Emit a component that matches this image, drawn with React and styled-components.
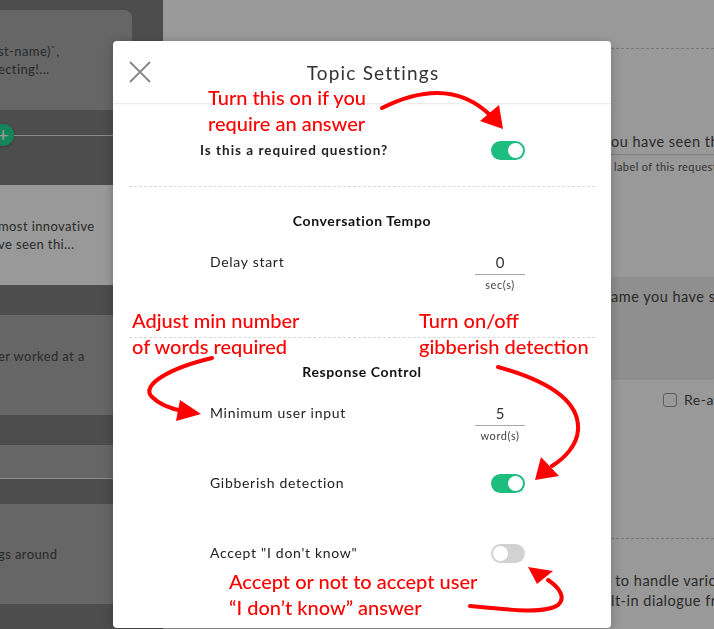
import styled, { createGlobalStyle } from "styled-components";

const colors = {
  sidebar: "#808080",
  card: "#aaaaaa",
  text: "#474747",
  green: "#1dbd80",
  red: "#ff0000",
};

const GlobalStyle = createGlobalStyle`
  html, body {
    margin: 0;
    padding: 0;
    height: 100%;
    overflow: hidden;
  }
  body {
    font-family: Lato, "Liberation Sans", sans-serif;
  }
  * {
    box-sizing: border-box;
  }
`;

export default function App() {
  return (
    <>
      <GlobalStyle />
      <Page>
        <Sidebar>
          <SideCard gap={0}>
            <span>st-name)`,</span>
            <span>ecting!...</span>
          </SideCard>
          <AddRow>
            <AddButton>+</AddButton>
            <AddLine />
          </AddRow>
          <SideCard active gap={0}>
            <span>most innovative</span>
            <span>ve seen thi...</span>
          </SideCard>
          <SideCard gap={30}>
            <span>er worked at a</span>
            <span>&nbsp;</span>
          </SideCard>
          <SideCard short gap={30} />
          <SideCard gap={25}>
            <span>gs around</span>
          </SideCard>
        </Sidebar>

        <Main>
          <DashedRule top={48} />
          <Question>ou have seen this year?</Question>
          <Helper>label of this request</Helper>
          <AnswerCard>ame you have seen</AnswerCard>
          <CheckRow>
            <CheckBox />
            <span>Re-ask the question</span>
          </CheckRow>
          <DashedRule top={128} />
          <Paragraph>
            <span>&nbsp;to handle various situations</span>
            <span>lt-in dialogue from the library</span>
          </Paragraph>
        </Main>
      </Page>

      <Overlay />

      <Modal>
        <Header>
          <CloseButton aria-label="close">
            <svg width="22" height="22" viewBox="0 0 22 22">
              <path d="M1 1 L21 21 M21 1 L1 21" stroke="#8a8a8a" strokeWidth="2" fill="none" />
            </svg>
          </CloseButton>
          <Title>Topic Settings</Title>
          <span />
        </Header>

        <Body>
          <Section top={34} bottom={24}>
            <Row indent={71} compact>
              <Label strong>Is this a required question?</Label>
              <Control>
                <Toggle on />
              </Control>
            </Row>
          </Section>

          <Section divided top={24} bottom={44}>
            <Heading>Conversation Tempo</Heading>
            <Rows>
              <Row>
                <Label>Delay start</Label>
                <Control>
                  <Value>0</Value>
                  <Unit>sec(s)</Unit>
                </Control>
              </Row>
            </Rows>
          </Section>

          <Section divided top={24} bottom={0}>
            <Heading>Response Control</Heading>
            <Rows>
              <Row>
                <Label>Minimum user input</Label>
                <Control>
                  <Value>5</Value>
                  <Unit>word(s)</Unit>
                </Control>
              </Row>
              <Row>
                <Label>Gibberish detection</Label>
                <Control>
                  <Toggle on />
                </Control>
              </Row>
              <Row>
                <Label>Accept "I don't know"</Label>
                <Control>
                  <Toggle />
                </Control>
              </Row>
            </Rows>
          </Section>
        </Body>

        {/* annotations drawn over the dialog */}
        <Notes>
          <Arrows width="498" height="587" viewBox="0 0 498 587">
            <g stroke={colors.red} strokeWidth="4" fill="none" strokeLinecap="round">
              <path d="M269 67 Q337 33 379 76" />
              <path d="M99 317 C57 327 27 344 39 356 C47 364 59 368 70 370" />
              <path d="M385 326 C432 339 467 359 465 389 C464 404 452 417 439 425" />
              <path d="M357 565 C397 569 432 573 445 564 C453 557 447 547 435 539" />
            </g>
            <g fill={colors.red}>
              <polygon points="390,88 367,80 386,64" />
              <polygon points="88,373 67,359 63,380" />
              <polygon points="422,439 428,416 446,435" />
              <polygon points="415,526 424,543 440,530" />
            </g>
          </Arrows>
          <Note x={95} y={44}>
            Turn this on if you
            <br />
            require an answer
          </Note>
          <Note x={19} y={267}>
            Adjust min number
            <br />
            of words required
          </Note>
          <Note x={306} y={267}>
            Turn on/off
            <br />
            gibberish detection
          </Note>
          <Note x={116} y={528}>
            Accept or not to accept user
            <br />
            “I don’t know” answer
          </Note>
        </Notes>
      </Modal>
    </>
  );
}

/* =================== Page behind the dialog =================== */

const Page = styled.div`
  display: flex;
  height: 100vh;
  overflow: hidden;
`;

const Sidebar = styled.div`
  width: 163px;
  flex-shrink: 0;
  background: ${colors.sidebar};
  padding-top: 10px;
  display: flex;
  flex-direction: column;
  overflow: hidden;
`;

const SideCard = styled.div`
  height: ${(p) => (p.short ? 34 : 100)}px;
  margin-top: ${(p) => p.gap}px;
  margin-right: 31px;
  margin-left: -2px;
  background: ${(p) => (p.active ? "#ffffff" : colors.card)};
  border-radius: 0 8px 8px 0;
  border-bottom: ${(p) => (p.short ? "1px solid #e8e8e8" : "none")};
  display: flex;
  flex-direction: column;
  justify-content: center;
  font-size: 13px;
  line-height: 18.5px;
  letter-spacing: 0.4px;
  color: ${colors.text};
  white-space: nowrap;
  flex-shrink: 0;
`;

const AddRow = styled.div`
  height: 75px;
  display: flex;
  align-items: flex-start;
  padding-top: 14px;
  flex-shrink: 0;
`;

const AddButton = styled.div`
  width: 22px;
  height: 22px;
  margin-left: -8px;
  border-radius: 50%;
  background: #20de9c;
  color: #ffffff;
  font-size: 20px;
  line-height: 21px;
  text-align: center;
  box-shadow: 0 1px 3px rgba(0, 0, 0, 0.3);
  flex-shrink: 0;
`;

const AddLine = styled.div`
  flex: 1;
  height: 1px;
  margin-top: 11px;
  background: #e6e6e6;
`;

const Main = styled.div`
  flex: 1;
  background: #ffffff;
  padding-left: 448px;
  display: flex;
  flex-direction: column;
  color: ${colors.text};
  white-space: nowrap;
  overflow: hidden;
`;

const DashedRule = styled.div`
  margin-top: ${(p) => p.top}px;
  border-top: 1px dashed #c8c8c8;
`;

const Question = styled.div`
  margin-top: 83px;
  font-size: 14.5px;
  line-height: 20px;
  letter-spacing: 0.5px;
  padding-bottom: 2px;
  border-bottom: 1px solid #d0d0d0;
`;

const Helper = styled.div`
  margin-top: 5px;
  font-size: 11px;
  line-height: 14px;
  letter-spacing: 0.4px;
  padding-left: 3px;
  color: #555555;
`;

const AnswerCard = styled.div`
  margin-top: 103px;
  height: 101px;
  padding-top: 10px;
  background: #eeeeee;
  font-size: 14.5px;
  line-height: 20px;
  letter-spacing: 0.5px;
  box-shadow: 0 1px 2px rgba(0, 0, 0, 0.15);
`;

const CheckRow = styled.div`
  margin-top: 12px;
  padding-left: 52px;
  display: flex;
  align-items: center;
  gap: 7px;
  font-size: 14px;
  line-height: 20px;
  letter-spacing: 0.5px;
`;

const CheckBox = styled.span`
  width: 14px;
  height: 14px;
  flex-shrink: 0;
  border: 1px solid #9a9a9a;
  border-radius: 3px;
  background: #ffffff;
`;

const Paragraph = styled.div`
  margin-top: 32px;
  display: flex;
  flex-direction: column;
  font-size: 14.5px;
  line-height: 20px;
  letter-spacing: 0.5px;
`;

const Overlay = styled.div`
  position: fixed;
  inset: 0;
  background: rgba(0, 0, 0, 0.4);
`;

/* =================== Dialog =================== */

const Modal = styled.div`
  position: fixed;
  left: 113px;
  top: 41px;
  width: 498px;
  height: 587px;
  background: #ffffff;
  border-radius: 4px;
  box-shadow: 0 2px 12px rgba(0, 0, 0, 0.25);
  display: flex;
  flex-direction: column;
  overflow: hidden;
`;

const Header = styled.div`
  height: 63px;
  flex-shrink: 0;
  display: grid;
  grid-template-columns: 60px 1fr 38px;
  align-items: center;
  border-bottom: 1px solid #ededed;
  box-shadow: 0 1px 2px rgba(0, 0, 0, 0.03);
`;

const CloseButton = styled.button`
  width: 22px;
  height: 22px;
  margin-left: 16px;
  padding: 0;
  border: none;
  background: none;
  display: flex;
  cursor: pointer;
`;

const Title = styled.div`
  text-align: center;
  font-size: 19px;
  letter-spacing: 1.2px;
  color: #333333;
`;

const Body = styled.div`
  padding: 0 16px;
  display: flex;
  flex-direction: column;
`;

const Section = styled.div`
  padding-top: ${(p) => p.top}px;
  padding-bottom: ${(p) => p.bottom}px;
  border-top: ${(p) => (p.divided ? "1px dashed #d9d9d9" : "none")};
  display: flex;
  flex-direction: column;
`;

const Heading = styled.div`
  text-align: center;
  font-size: 14px;
  line-height: 20px;
  font-weight: 700;
  letter-spacing: 0.6px;
  color: #111111;
`;

const Rows = styled.div`
  margin-top: 19px;
  display: flex;
  flex-direction: column;
  gap: 27px;
`;

const Row = styled.div`
  display: flex;
  align-items: flex-start;
  justify-content: space-between;
  margin-left: ${(p) => p.indent || 81}px;
  margin-right: 70px;
  min-height: ${(p) => (p.compact ? 24 : 43)}px;
`;

const Label = styled.div`
  font-size: ${(p) => (p.strong ? 13.5 : 14)}px;
  font-weight: ${(p) => (p.strong ? 700 : 400)};
  line-height: 24px;
  letter-spacing: ${(p) => (p.strong ? 1 : 0.7)}px;
  color: #222222;
`;

const Control = styled.div`
  width: 50px;
  display: flex;
  flex-direction: column;
  align-items: flex-end;
`;

const Value = styled.div`
  width: 50px;
  height: 25px;
  line-height: 24px;
  text-align: center;
  font-size: 15px;
  color: #333333;
  border-bottom: 1px solid #a8a8a8;
`;

const Unit = styled.div`
  width: 50px;
  margin-top: 3px;
  text-align: center;
  font-size: 11px;
  line-height: 14px;
  letter-spacing: 0.6px;
  color: #444444;
`;

const Toggle = styled.span`
  position: relative;
  display: block;
  width: 34px;
  height: 19px;
  margin-top: 3px;
  border-radius: 10px;
  background: ${(p) => (p.on ? colors.green : "#d2d2d2")};

  &::after {
    content: "";
    position: absolute;
    top: 2px;
    left: ${(p) => (p.on ? 17 : 2)}px;
    width: 15px;
    height: 15px;
    border-radius: 50%;
    background: #ffffff;
  }
`;

/* =================== Annotations =================== */

const Notes = styled.div`
  position: absolute;
  inset: 0;
  pointer-events: none;
`;

const Arrows = styled.svg`
  position: absolute;
  left: 0;
  top: 0;
`;

const Note = styled.div`
  position: absolute;
  left: ${(p) => p.x}px;
  top: ${(p) => p.y}px;
  color: ${colors.red};
  font-family: Lato, "Liberation Sans", sans-serif;
  font-size: 20px;
  font-weight: 500;
  line-height: 25.5px;
  white-space: nowrap;
`;
